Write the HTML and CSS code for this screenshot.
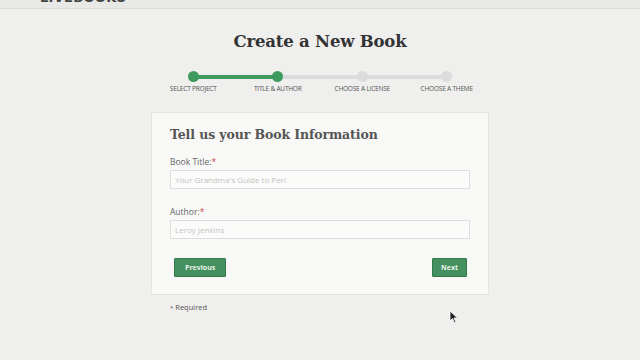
FILE: index.html
```html
<!DOCTYPE html>
<html>

<head>
    <meta charset="UTF-8">
    <title>Create a New Book</title>
    <link rel="stylesheet" href="styles.css">
</head>

<body>
    <div class="topbar">
        <span class="logo">LIVEBOOKS</span>
    </div>

    <h1 class="page-title">Create a New Book</h1>

    <div class="steps">
        <div class="step done">
            <span class="dot"></span>
            <span class="label">Select Project</span>
        </div>
        <div class="step done">
            <span class="dot"></span>
            <span class="label">Title &amp; Author</span>
        </div>
        <div class="step">
            <span class="dot"></span>
            <span class="label">Choose a License</span>
        </div>
        <div class="step last">
            <span class="dot"></span>
            <span class="label">Choose a Theme</span>
        </div>
    </div>

    <div class="card">
        <h2>Tell us your Book Information</h2>

        <label class="field-label">Book Title:<span class="req">*</span></label>
        <input class="field" type="text" placeholder="Your Grandma's Guide to Perl">

        <label class="field-label">Author:<span class="req">*</span></label>
        <input class="field" type="text" placeholder="Leroy Jenkins">

        <div class="buttons">
            <button class="btn prev">Previous</button>
            <button class="btn">Next</button>
        </div>
    </div>

    <div class="required-note"><span class="star">*</span> Required</div>

    <svg class="cursor" width="10" height="14" viewBox="0 0 10 14">
        <path d="M1 1 L1 11 L3.5 8.5 L5.5 13 L7 12.3 L5 8 L8.5 8 Z" fill="#222" stroke="#fff" stroke-width="0.8"/>
    </svg>
</body>

</html>
```

FILE: styles.css
```css
body {
    margin: 0;
    background: #efefed;
    font-family: "Open Sans", "Liberation Sans", sans-serif;
    color: #555;
    position: relative;
    height: 360px;
    overflow: hidden;
}

.topbar {
    height: 8px;
    background: #e8e8e6;
    border-bottom: 1px solid #dcdcda;
    overflow: hidden;
    position: relative;
}

.logo {
    position: absolute;
    left: 40px;
    top: -10px;
    font-family: "DejaVu Sans", sans-serif;
    font-weight: bold;
    font-size: 13px;
    letter-spacing: 0.3px;
    color: #444;
}

.page-title {
    margin: 23px 0 0;
    text-align: center;
    font-family: "DejaVu Serif", serif;
    font-weight: bold;
    font-size: 16.5px;
    color: #333;
    letter-spacing: -0.2px;
}

.steps {
    display: flex;
    width: 340px;
    margin: 20px 0 0 151px;
}

.step {
    width: 84.5px;
    display: flex;
    flex-direction: column;
    align-items: center;
    position: relative;
}

.step::after {
    content: "";
    position: absolute;
    top: 4px;
    left: 50%;
    width: 100%;
    height: 4px;
    background: #dcdcdc;
}

.step.done::after {
    background: #3e9a5f;
}

.step:nth-child(2)::after {
    background: #dcdcdc;
}

.step.last::after {
    display: none;
}

.dot {
    width: 11px;
    height: 11px;
    border-radius: 50%;
    background: #dcdcdc;
    position: relative;
    z-index: 1;
}

.step.done .dot {
    background: #3e9a5f;
}

.label {
    margin-top: 2px;
    font-size: 6.5px;
    text-transform: uppercase;
    letter-spacing: -0.2px;
    color: #555;
    white-space: nowrap;
}

.card {
    width: 300px;
    margin: 19px auto 0;
    padding: 14px 18px 17px;
    background: #f8f8f7;
    border: 1px solid #e4e4e2;
}

.card h2 {
    margin: 0 0 14px;
    font-family: "DejaVu Serif", serif;
    font-weight: bold;
    font-size: 12.5px;
    color: #555;
    letter-spacing: -0.1px;
}

.field-label {
    display: block;
    font-size: 8.5px;
    color: #666;
    margin-bottom: 3px;
}

.req {
    color: #d04050;
}

.field {
    display: block;
    width: 100%;
    box-sizing: border-box;
    height: 19px;
    margin: 0 0 17px;
    padding: 0 4px;
    border: 1px solid #dedede;
    background: #fbfbfa;
    font-family: "Open Sans", sans-serif;
    font-size: 8px;
}

.field::placeholder {
    color: #c4c4c4;
}

.buttons {
    display: flex;
    justify-content: space-between;
    padding: 2px 3px 0 4px;
}

.btn {
    height: 19px;
    padding: 0 8px;
    background: #45905f;
    border: 1px solid #36784d;
    border-radius: 1px;
    color: #e8f3ea;
    font-family: "Open Sans", sans-serif;
    font-weight: bold;
    font-size: 7px;
}

.btn.prev {
    padding: 0 10px;
}

.required-note {
    width: 338px;
    margin: 7px auto 0;
    padding-left: 19px;
    box-sizing: border-box;
    font-size: 7.5px;
    color: #555;
}

.star {
    font-size: 6px;
}

.cursor {
    position: absolute;
    left: 449px;
    top: 310px;
}
```
